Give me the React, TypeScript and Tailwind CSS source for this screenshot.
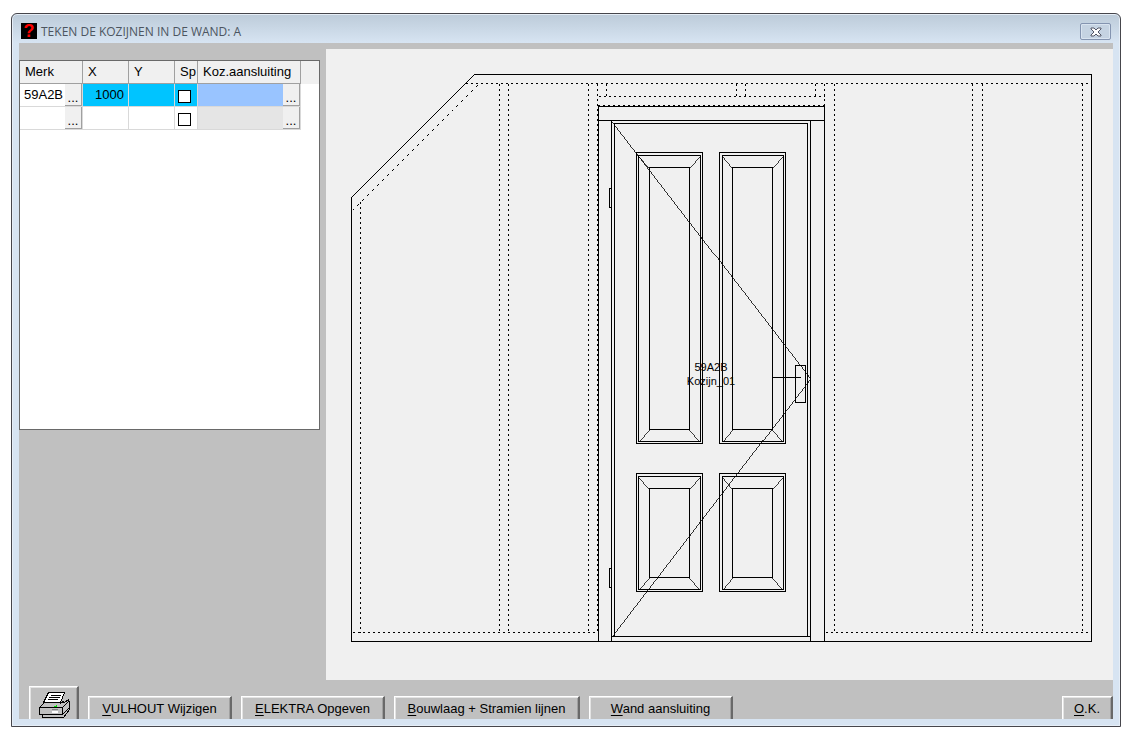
import { useState } from 'react';
import type { ReactNode } from 'react';

type Row = {
  merk: string;
  x: string;
  y: string;
  sp: boolean;
  aansluiting: string;
};

const initialRows: Row[] = [
  { merk: '59A2B', x: '1000', y: '', sp: false, aansluiting: '' },
  { merk: '', x: '', y: '', sp: false, aansluiting: '' },
];

const panels = [
  { x: 636, y: 152, bottom: 443 },
  { x: 719, y: 152, bottom: 443 },
  { x: 636, y: 473, bottom: 591 },
  { x: 719, y: 473, bottom: 591 },
];

function MoreButton({ label }: { label: string }) {
  return (
    <button
      type="button"
      aria-label={label}
      className="h-[22px] w-[17px] shrink-0 border-r border-b border-[#a0a0a0] bg-[#f0f0f0] pt-1 text-[13px] leading-5"
    >
      ...
    </button>
  );
}

function ToolButton({
  children,
  className,
}: {
  children: ReactNode;
  className: string;
}) {
  return (
    <button
      type="button"
      className={`h-7 shrink-0 border-t border-r-2 border-l border-t-white border-r-[#696969] border-l-white bg-[#c0c0c0] pb-1 text-[13px] leading-5 shadow-[inset_1px_1px_0_#e3e3e3,inset_-1px_0_0_#a0a0a0] ${className}`}
    >
      {children}
    </button>
  );
}

function PrinterIcon() {
  return (
    <svg
      width="32"
      height="28"
      viewBox="38 691 32 28"
      shapeRendering="crispEdges"
      aria-hidden="true"
    >
      <g transform="translate(0.5 0.5)" stroke="#000" fill="none">
        <path d="M39 707L44 702H64L68 699L69 702V709L63 717H42V714H39Z" fill="#c0c0c0" />
        <path d="M48 692H64L60 702H43Z" fill="#fff" />
        <path d="M50 695H60M48 697H59M47 699H57" />
        <path d="M39 707H62L68 701M62 707V714M39 714H62L69 707" />
        <path d="M60 703L64 700" />
        <path d="M51 709H57" stroke="#808080" />
        <path d="M51 711H57M51 712H57" stroke="#fff" />
        <path d="M53 706H56M55 705H56" stroke="#00e000" />
      </g>
    </svg>
  );
}

function Panel({ x, y, bottom }: { x: number; y: number; bottom: number }) {
  // the bevel of the right hand panels starts one unit further in
  const left = x === 636 ? x + 2 : x + 3;
  const right = x + 64;
  const coreLeft = x + 13;
  const coreRight = x + 53;
  return (
    <g>
      <path d={`M${x} ${y}H${x + 66}V${bottom}H${x}Z`} />
      <path d={`M${left} ${y + 3}H${right}V${bottom - 2}H${left}Z`} />
      <path
        d={`M${coreLeft} ${y + 15}H${coreRight}V${bottom - 14}H${coreLeft}Z`}
      />
      <path
        strokeWidth="0.75"
        d={`M${left} ${y + 3}L${coreLeft} ${y + 15}M${right} ${y + 3}L${coreRight} ${y + 15}M${left} ${bottom - 2}L${coreLeft} ${bottom - 14}M${right} ${bottom - 2}L${coreRight} ${bottom - 14}`}
      />
    </g>
  );
}

function WallDrawing() {
  return (
    <svg
      viewBox="326 49 787 631"
      className="block h-auto w-full"
      role="img"
      aria-label="Wand A"
      shapeRendering="crispEdges"
    >
      <g transform="translate(0.5 0.5)" fill="none" stroke="#000">
        {/* Wall outline */}
        <path d="M351 197L474 74H1091V641H351Z" />

        {/* Studs and plates */}
        <g strokeDasharray="2 3">
          <path d="M465 83H1091" />
          <path d="M352 632H598M825 632H1091" />
          <path d="M360 201V632" />
          <path d="M499 83V632" />
          <path d="M508 83V632" />
          <path d="M588 83V632" />
          <path d="M597 83V632" />
          <path d="M834 83V632" />
          <path d="M972 83V632" />
          <path d="M982 83V632" />
          <path d="M1082 83V632" />
          <path d="M606 83V96M736 83V96M745 83V96M815 83V96M824 83V106" />
          <path d="M598 96H824M597 105H824" />
        </g>
        <path d="M352 210L478 84" strokeDasharray="2.8 4.2" />

        {/* Frame */}
        <path d="M598 641V106H824V641M598 120H824" />
        <path d="M611 641V120M810 641V120M611 636H810" />
        <path d="M614 636V123H807V636" />
        <path d="M611 188H609V207H611M611 568H609V587H611" />

        {panels.map((panel) => (
          <Panel key={`${panel.x}-${panel.y}`} {...panel} />
        ))}

        {/* Swing and handle */}
        <path d="M612 121L810 378L612 636" strokeWidth="0.8" />
        <path d="M795 365H805V402H795ZM772 377H800" />
      </g>
      <g
        fontFamily="'Liberation Sans', Arial, sans-serif"
        fontSize="11"
        textAnchor="middle"
      >
        <text x="711" y="371">
          59A2B
        </text>
        <text x="711" y="385">
          Kozijn_01
        </text>
      </g>
    </svg>
  );
}

function FrameTable() {
  const [rows, setRows] = useState(initialRows);

  const update = (index: number, patch: Partial<Row>) =>
    setRows(rows.map((row, i) => (i === index ? { ...row, ...patch } : row)));

  return (
    <div className="mt-[17px] h-[370px] w-[301px] shrink-0 border border-[#696969] bg-white">
      <table className="w-full table-fixed border-separate border-spacing-0 text-[13px]">
        <thead>
          <tr className="h-[23px] bg-[#f0f0f0] text-left leading-5 [&>th]:border-b [&>th]:border-[#a0a0a0] [&>th]:p-0 [&>th]:font-normal">
            <th className="w-[63px] border-r">
              <span className="pl-[5px]">Merk</span>
            </th>
            <th className="w-[46px] border-r">
              <span className="pl-[5px]">X</span>
            </th>
            <th className="w-[46px] border-r">
              <span className="pl-[5px]">Y</span>
            </th>
            <th className="w-[23px] border-r">
              <span className="pl-[5px]">Sp</span>
            </th>
            <th className="w-[103px] border-r">
              <span className="pl-[5px]">Koz.aansluiting</span>
            </th>
            <th className="border-[#f0f0f0]!" />
          </tr>
        </thead>
        <tbody>
          {rows.map((row, i) => {
            const active = i === 0;
            const cell = `h-[23px] border-r border-b border-[#d9d9d9] p-0 ${active ? 'bg-[#00c4ff]' : 'bg-white'}`;
            return (
              <tr key={i}>
                <td className="h-[23px] border-r border-b border-[#d9d9d9] bg-white p-0">
                  <div className="flex">
                    <input
                      aria-label={`Merk ${i + 1}`}
                      value={row.merk}
                      onChange={(e) => update(i, { merk: e.target.value })}
                      className="h-5 w-0 flex-1 bg-transparent pl-1 outline-none"
                    />
                    <MoreButton label={`Merk ${i + 1} kiezen`} />
                  </div>
                </td>
                <td className={cell}>
                  <input
                    aria-label={`X ${i + 1}`}
                    value={row.x}
                    onChange={(e) => update(i, { x: e.target.value })}
                    className="block h-[22px] w-full bg-transparent pr-1 pb-0.5 text-right outline-none"
                  />
                </td>
                <td className={cell}>
                  <input
                    aria-label={`Y ${i + 1}`}
                    value={row.y}
                    onChange={(e) => update(i, { y: e.target.value })}
                    className="block h-[22px] w-full bg-transparent pr-1 pb-0.5 text-right outline-none"
                  />
                </td>
                <td className={cell}>
                  <input
                    type="checkbox"
                    aria-label={`Sp ${i + 1}`}
                    checked={row.sp}
                    onChange={(e) => update(i, { sp: e.target.checked })}
                    className="mt-0.5 ml-[3px] block size-[13px] appearance-none border border-black bg-white checked:bg-black"
                  />
                </td>
                <td
                  className={`h-[23px] border-r border-b border-[#d9d9d9] p-0 ${active ? 'bg-[#99c4ff]' : 'bg-[#e5e5e5]'}`}
                >
                  <div className="flex">
                    <input
                      aria-label={`Koz.aansluiting ${i + 1}`}
                      value={row.aansluiting}
                      onChange={(e) =>
                        update(i, { aansluiting: e.target.value })
                      }
                      className="h-5 w-0 flex-1 bg-transparent pl-1 outline-none"
                    />
                    <MoreButton label={`Koz.aansluiting ${i + 1} kiezen`} />
                  </div>
                </td>
                <td />
              </tr>
            );
          })}
        </tbody>
      </table>
    </div>
  );
}

export default function App() {
  return (
    <div className="min-h-screen bg-white pt-[13px] pr-3.5 pb-3 pl-[11px] font-['Liberation_Sans',Arial,sans-serif] text-black">
      <div className="rounded-t-md border border-[#46464c] bg-[#d7e4f2] bg-[linear-gradient(#bccbd9,#d7e4f2_29px)] px-[7px] pb-[7px] shadow-[inset_0_0_0_1px_#e6eef7]">
        {/* Title bar */}
        <header className="flex h-[29px] items-center">
          <span
            aria-hidden="true"
            className="mt-1 ml-0.5 size-4 bg-black text-center text-[18px] leading-4 font-black text-[#ff0000]"
          >
            ?
          </span>
          <h1 className="mt-1.5 ml-1 font-['Open_Sans','Noto_Sans',sans-serif] text-[12px] leading-4 text-[#4c5560]">
            TEKEN DE KOZIJNEN IN DE WAND: A
          </h1>
          <button
            type="button"
            aria-label="Sluiten"
            className="mt-1.5 mr-0.5 ml-auto flex h-[17px] w-[31px] items-center justify-center rounded-xs border border-[#8494b0] bg-[#c5d3e2] shadow-[inset_0_0_0_1px_#d9e4f0]"
          >
            <svg width="12" height="10" viewBox="0 0 12 10" aria-hidden="true">
              <path
                d="M1 1H4L6 3L8 1H11V2L8 5L11 8V9H8L6 7L4 9H1V8L4 5L1 2Z"
                fill="#fff"
                stroke="#535666"
                strokeLinejoin="round"
              />
            </svg>
          </button>
        </header>

        <div className="bg-[#c0c0c0]">
          <main className="flex items-start gap-1.5">
            <FrameTable />
            <section className="mt-1.5 min-w-0 flex-1 bg-[#f0f0f0]">
              <WallDrawing />
            </section>
          </main>

          {/* Button bar, the lower edge of the buttons falls off the window */}
          <footer className="flex h-[39px] items-start overflow-hidden pt-4 pl-2.5">
            <button
              type="button"
              aria-label="Afdrukken"
              className="-mt-2.5 mr-[9px] flex h-10 w-[50px] shrink-0 justify-center border-t border-r-2 border-l border-t-white border-r-[#696969] border-l-white bg-[#c0c0c0] pt-1 shadow-[inset_1px_1px_0_#e3e3e3,inset_-1px_0_0_#a0a0a0]"
            >
              <PrinterIcon />
            </button>
            <ToolButton className="mr-[9px] w-36">
              <u className="underline-offset-2">V</u>ULHOUT Wijzigen
            </ToolButton>
            <ToolButton className="mr-[9px] w-36">
              <u className="underline-offset-2">E</u>LEKTRA Opgeven
            </ToolButton>
            <ToolButton className="mr-[9px] w-[186px]">
              <u className="underline-offset-2">B</u>ouwlaag + Stramien lijnen
            </ToolButton>
            <ToolButton className="w-36">
              <u className="underline-offset-2">W</u>and aansluiting
            </ToolButton>
            <ToolButton className="ml-auto w-[51px]">
              <u className="underline-offset-2">O</u>.K.
            </ToolButton>
          </footer>
        </div>
      </div>
    </div>
  );
}
